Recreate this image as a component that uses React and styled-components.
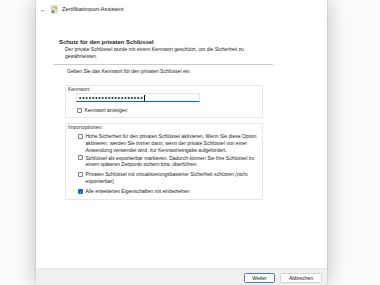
import React from "react";
import styled, { createGlobalStyle } from "styled-components";

const Global = createGlobalStyle`
  html, body {
    margin: 0;
    padding: 0;
    background: #fcfcfc;
    overflow: hidden;
  }
  body {
    font-family: "Liberation Sans", Arial, sans-serif;
    color: #1b1b1b;
  }
`;

const Page = styled.div`
  width: 380px;
  height: 285px;
  display: flex;
`;

const Window = styled.div`
  margin-left: 36px;
  width: 291px;
  height: 285px;
  background: #fff;
  display: flex;
  flex-direction: column;
  box-shadow: 0 0 22px rgba(0, 0, 0, 0.26), 0 0 1px rgba(0, 0, 0, 0.4);
`;

const TitleBar = styled.div`
  height: 18px;
  display: flex;
  align-items: center;
  padding-left: 4px;
  font-size: 5.6px;
`;

const Back = styled.span`
  font-size: 7px;
  color: #444;
  width: 11px;
`;

const AppIcon = styled.svg`
  width: 7px;
  height: 9px;
  margin-right: 4px;
`;

const Body = styled.div`
  flex: 1;
  display: flex;
  flex-direction: column;
  padding-top: 20.5px;
`;

const Heading = styled.div`
  font-weight: bold;
  font-size: 5.9px;
  line-height: 7px;
  padding-left: 23px;
`;

const Sub = styled.div`
  font-size: 5px;
  line-height: 7px;
  padding-left: 29px;
`;

const Separator = styled.div`
  margin: 4px 54px 0 17px;
  height: 1px;
  background: #cbcbcb;
`;

const Text = styled.div`
  font-size: 5px;
  line-height: 7px;
  margin: 3.5px 0 0 31px;
`;

const Group = styled.div`
  margin: ${(p) => p.$top}px 0 0 29px;
  width: 194px;
  border: 1px solid #e6e6e6;
  border-radius: 1px;
  padding: 0 0 ${(p) => p.$bottom}px 2px;
  display: flex;
  flex-direction: column;
`;

const GroupLabel = styled.div`
  font-size: 5px;
  line-height: 7px;
  color: #333;
`;

const PasswordField = styled.div`
  margin: 0 0 0 8px;
  width: 124px;
  height: 9px;
  box-sizing: border-box;
  border: 1px solid #e3e3e3;
  border-bottom: 1.5px solid #0a64c8;
  display: flex;
  align-items: center;
  padding-left: 2px;
  font-size: 6.5px;
  letter-spacing: 0.95px;
  color: #222;
`;

const Caret = styled.span`
  display: inline-block;
  width: 0.6px;
  height: 6px;
  background: #111;
`;

const Row = styled.label`
  display: flex;
  align-items: flex-start;
  gap: 2.5px;
  margin: ${(p) => p.$top || 0}px 0 0 ${(p) => p.$left}px;
  font-size: 5px;
  line-height: 6.8px;
`;

const Box = styled.span`
  flex: none;
  width: 5px;
  height: 5px;
  margin-top: 0.8px;
  box-sizing: border-box;
  border-radius: 1px;
  border: 0.7px solid ${(p) => (p.$checked ? "#0a64c8" : "#7a7a7a")};
  background: ${(p) => (p.$checked ? "#0a64c8" : "#fff")};
  display: flex;
  align-items: center;
  justify-content: center;
`;

const Footer = styled.div`
  height: 17px;
  background: #f0f0f0;
  border-top: 1px solid #e8e8e8;
  display: flex;
  justify-content: flex-end;
  align-items: flex-start;
  gap: 5px;
  padding: 4px 5px 0 0;
  box-sizing: border-box;
`;

const Button = styled.button`
  all: unset;
  box-sizing: border-box;
  width: ${(p) => p.$w}px;
  height: 10px;
  background: #fdfdfd;
  border: 0.8px solid ${(p) => (p.$primary ? "#3f7fc8" : "#d3d3d3")};
  border-radius: 1.5px;
  font-family: "Liberation Sans", Arial, sans-serif;
  font-size: 5px;
  color: #1b1b1b;
  display: flex;
  align-items: center;
  justify-content: center;
`;

const Check = ({ checked }) => (
  <Box $checked={checked}>
    {checked && (
      <svg width="4" height="4" viewBox="0 0 10 10">
        <path d="M2 5.2 L4.2 7.4 L8.2 2.8" fill="none" stroke="#fff" strokeWidth="1.6" />
      </svg>
    )}
  </Box>
);

const Option = ({ checked, top, lines }) => (
  <Row $left={10} $top={top}>
    <Check checked={checked} />
    <span>
      {lines.map((l, i) => (
        <React.Fragment key={i}>
          {i > 0 && <br />}
          {l}
        </React.Fragment>
      ))}
    </span>
  </Row>
);

export default function App() {
  return (
    <>
      <Global />
      <Page>
        <Window>
          <TitleBar>
            <Back>←</Back>
            <AppIcon viewBox="0 0 7 9">
              <rect x="0.5" y="1" width="5.5" height="7" fill="#f4f4f4" stroke="#9a9a9a" strokeWidth="0.5" />
              <rect x="1.5" y="2.5" width="3.5" height="0.6" fill="#7aa0c8" />
              <rect x="1.5" y="3.8" width="3.5" height="0.6" fill="#7aa0c8" />
              <path d="M3.5 0.5 L6.8 3.5 L5.5 4.5 L2.5 1.5 Z" fill="#e8b820" />
              <circle cx="2.2" cy="6.5" r="1.5" fill="#5aa83c" />
            </AppIcon>
            <span>Zertifikatimport-Assistent</span>
          </TitleBar>
          <Body>
            <Heading>Schutz für den privaten Schlüssel</Heading>
            <Sub>
              Der private Schlüssel wurde mit einem Kennwort geschützt, um die Sicherheit zu
              <br />
              gewährleisten.
            </Sub>
            <Separator />
            <Text>Geben Sie das Kennwort für den privaten Schlüssel ein.</Text>
            <Group $top={10} $bottom={3}>
              <GroupLabel>Kennwort:</GroupLabel>
              <PasswordField>
                ••••••••••••••••••••
                <Caret />
              </PasswordField>
              <Row $left={9} $top={5}>
                <Check />
                <span>Kennwort anzeigen</span>
              </Row>
            </Group>
            <Group $top={5} $bottom={4}>
              <GroupLabel>Importoptionen:</GroupLabel>
              <Option
                top={2.5}
                lines={[
                  "Hohe Sicherheit für den privaten Schlüssel aktivieren. Wenn Sie diese Option",
                  "aktivieren, werden Sie immer dann, wenn der private Schlüssel von einer",
                  "Anwendung verwendet wird, zur Kennworteingabe aufgefordert.",
                ]}
              />
              <Option
                top={1}
                lines={[
                  "Schlüssel als exportierbar markieren. Dadurch können Sie Ihre Schlüssel zu",
                  "einem späteren Zeitpunkt sichern bzw. überführen.",
                ]}
              />
              <Option
                top={3}
                lines={[
                  "Privaten Schlüssel mit virtualisierungsbasierter Sicherheit schützen (nicht",
                  "exportierbar)",
                ]}
              />
              <Option top={3.5} checked lines={["Alle erweiterten Eigenschaften mit einbeziehen"]} />
            </Group>
          </Body>
          <Footer>
            <Button $w={31} $primary>
              Weiter
            </Button>
            <Button $w={42}>Abbrechen</Button>
          </Footer>
        </Window>
      </Page>
    </>
  );
}
